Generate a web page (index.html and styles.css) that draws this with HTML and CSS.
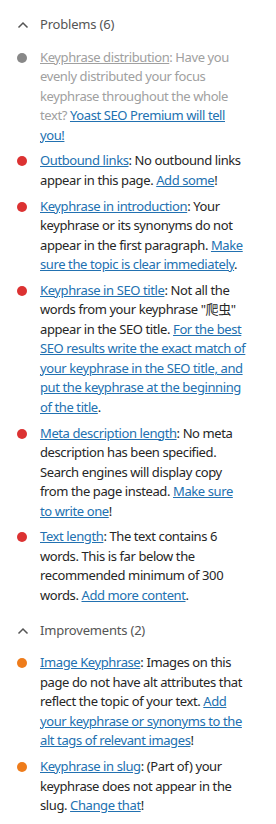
FILE: index.html
```html
<!DOCTYPE html>
<html lang="en">
<head>
    <meta charset="UTF-8">
    <meta name="viewport" content="width=device-width, initial-scale=1.0">
    <title>SEO analysis</title>
    <link rel="stylesheet" href="styles.css">
</head>
<body>

    <div class="analysis">

        <div class="section">
            <button class="sectionToggle" aria-expanded="true">
                <svg class="chevron" width="12" height="8" viewBox="0 0 12 8"><path d="M1.5 6.5 L6 2 L10.5 6.5" /></svg>
                <span>Problems (6)</span>
            </button>
            <ul class="results">
                <li class="result muted">
                    <span class="bullet grey"></span>
                    <p class="resultText"><a href="#" class="mutedLink">Keyphrase distribution</a>: Have you evenly distributed your focus keyphrase throughout the whole text? <a href="#">Yoast SEO Premium will tell you!</a></p>
                </li>
                <li class="result">
                    <span class="bullet red"></span>
                    <p class="resultText"><a href="#">Outbound links</a>: No outbound links appear in this page. <a href="#">Add some</a>!</p>
                </li>
                <li class="result">
                    <span class="bullet red"></span>
                    <p class="resultText"><a href="#">Keyphrase in introduction</a>: Your keyphrase or its synonyms do not appear in the first paragraph. <a href="#">Make sure the topic is clear immediately</a>.</p>
                </li>
                <li class="result">
                    <span class="bullet red"></span>
                    <p class="resultText"><a href="#">Keyphrase in SEO title</a>: Not all the words from your keyphrase "爬虫" appear in the SEO title. <a href="#">For the best SEO results write the exact match of your keyphrase in the SEO title, and put the keyphrase at the beginning of the title</a>.</p>
                </li>
                <li class="result">
                    <span class="bullet red"></span>
                    <p class="resultText"><a href="#">Meta description length</a>: No meta description has been specified. Search engines will display copy from the page instead. <a href="#">Make sure to write one</a>!</p>
                </li>
                <li class="result">
                    <span class="bullet red"></span>
                    <p class="resultText"><a href="#">Text length</a>: The text contains 6 words. This is far below the recommended minimum of 300 words. <a href="#">Add more content</a>.</p>
                </li>
            </ul>
        </div>

        <div class="section">
            <button class="sectionToggle" aria-expanded="true">
                <svg class="chevron" width="12" height="8" viewBox="0 0 12 8"><path d="M1.5 6.5 L6 2 L10.5 6.5" /></svg>
                <span>Improvements (2)</span>
            </button>
            <ul class="results">
                <li class="result">
                    <span class="bullet orange"></span>
                    <p class="resultText"><a href="#">Image Keyphrase</a>: Images on this page do not have alt attributes that reflect the topic of your text. <a href="#">Add your keyphrase or synonyms to the alt tags of relevant images</a>!</p>
                </li>
                <li class="result">
                    <span class="bullet orange"></span>
                    <p class="resultText"><a href="#">Keyphrase in slug</a>: (Part of) your keyphrase does not appear in the slug. <a href="#">Change that</a>!</p>
                </li>
            </ul>
        </div>

    </div>

</body>
</html>
```

FILE: styles.css
```css
body {
    font-family: 'Noto Sans', 'Noto Sans CJK SC', sans-serif;
    font-size: 13px;
    line-height: 19.5px;
    letter-spacing: -0.4px;
    color: #262626;
    background-color: #fff;
    margin: 0;
}

.analysis {
    width: 276px;
    padding: 2px 29px 0 17px;
    box-sizing: border-box;
}

.section + .section {
    margin-top: 2.5px;
}

.sectionToggle {
    display: flex;
    align-items: center;
    width: 100%;
    padding: 13px 0 13px;
    background: none;
    border: none;
    font: inherit;
    letter-spacing: -0.2px;
    color: #555;
    cursor: pointer;
    text-align: left;
}

.chevron {
    width: 12px;
    margin: 0 11px 0 0;
}

.chevron path {
    fill: none;
    stroke: #555;
    stroke-width: 1.5;
}

.results {
    list-style-type: none;
    margin: 0;
    padding: 0;
    display: flex;
    flex-direction: column;
    gap: 6.25px;
}

.result {
    display: flex;
    align-items: flex-start;
}

.bullet {
    flex: none;
    width: 10px;
    height: 10px;
    border-radius: 50%;
    margin: 5px 13px 0 0;
}

.grey {
    background-color: #888;
}

.red {
    background-color: #dc3232;
}

.orange {
    background-color: #ee7c1b;
}

.resultText {
    margin: 0;
    flex: 1;
}

a {
    color: #2271b1;
    text-decoration: underline;
}

.muted {
    color: #a0a0a0;
}

.mutedLink {
    color: #a0a0a0;
}
```
